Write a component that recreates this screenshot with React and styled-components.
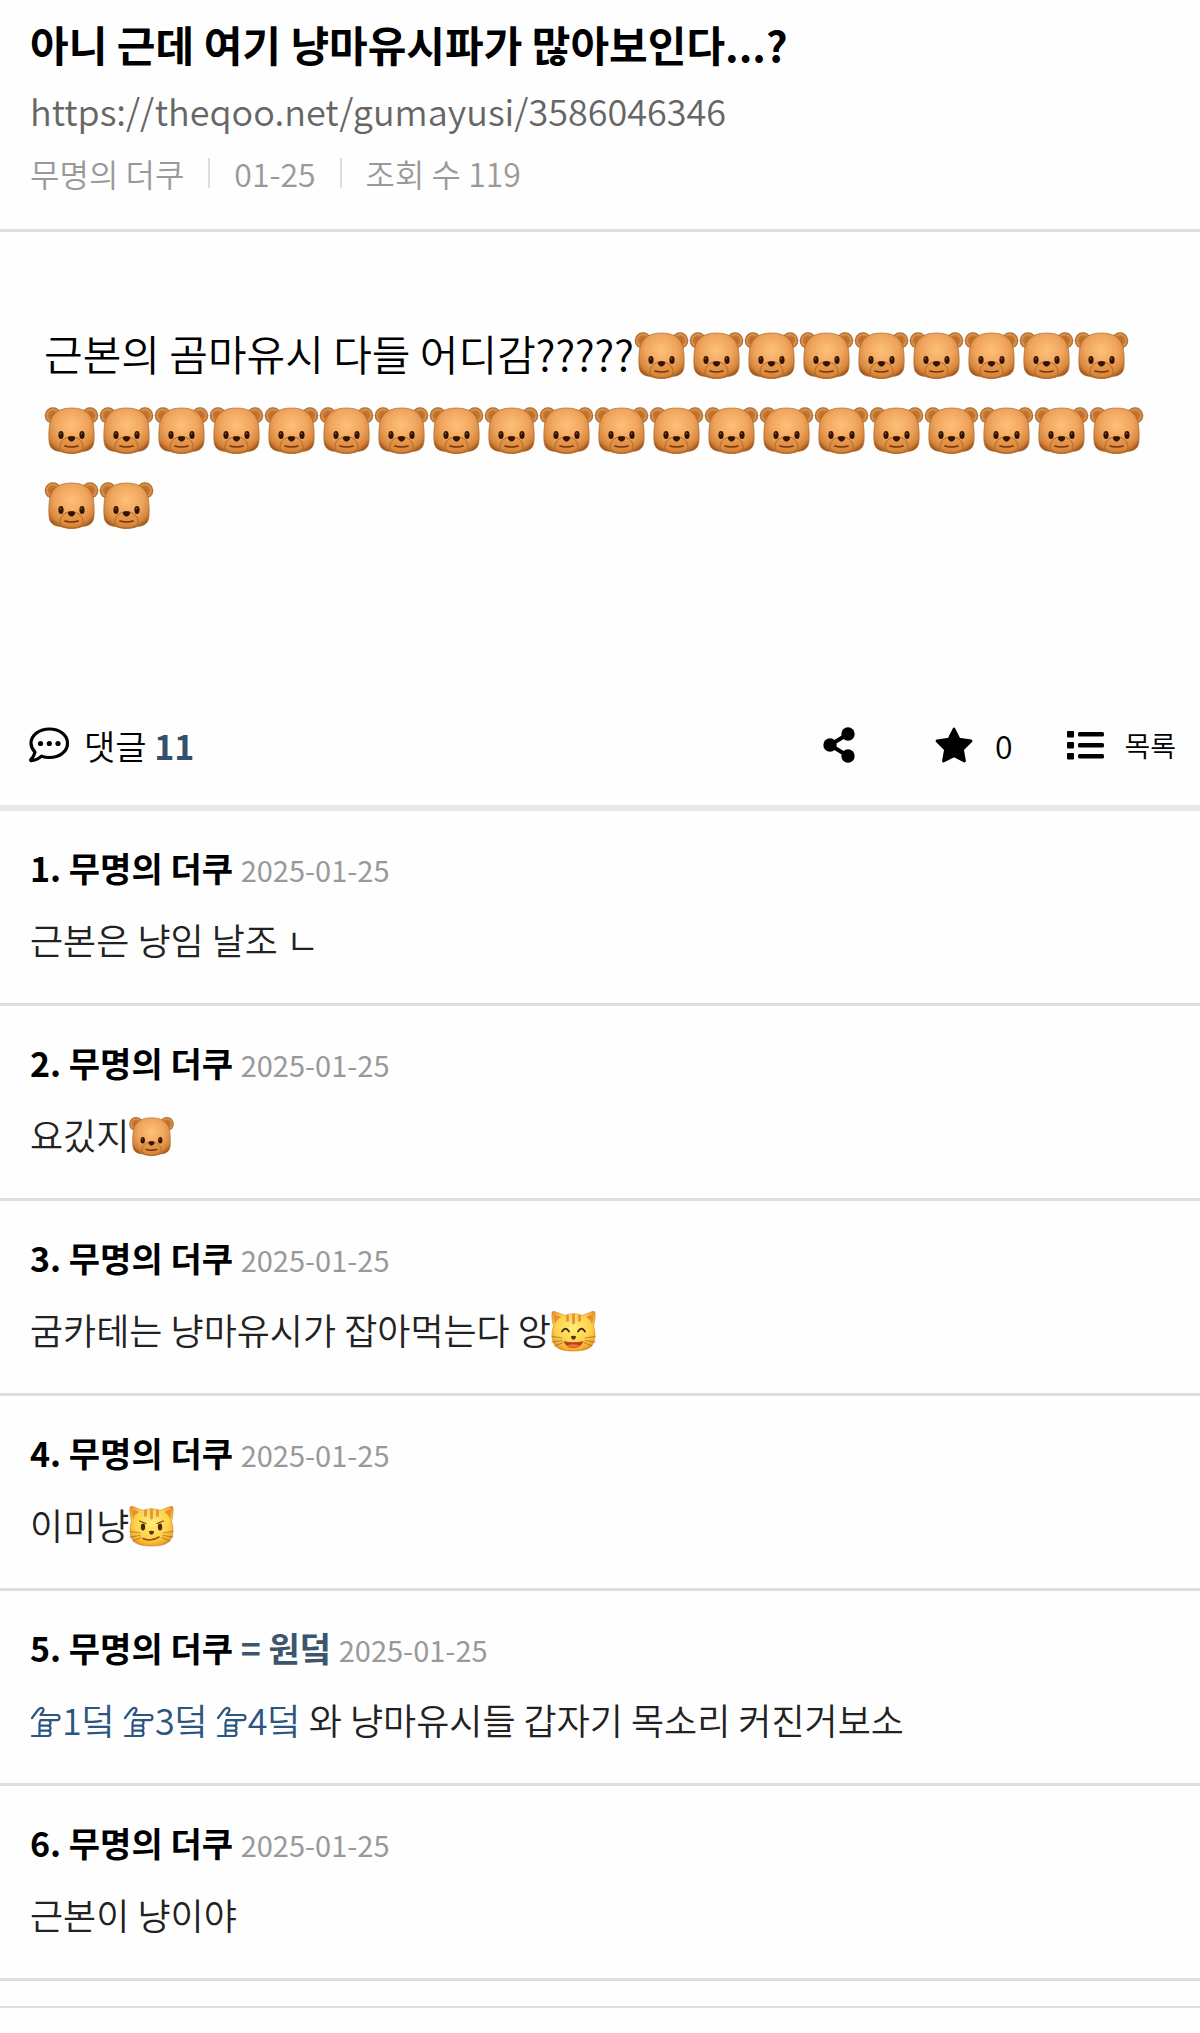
import React, { useId } from 'react'
import styled, { createGlobalStyle } from 'styled-components'

const GlobalStyle = createGlobalStyle`
  body {
    margin: 0;
    background: #fefefe;
    color: #000;
    font-family: "Noto Sans CJK KR", "Noto Sans", sans-serif;
  }
  a {
    color: inherit;
    text-decoration: none;
  }
`

const Header = styled.header`
  padding: 11px 30px 26px;
  border-bottom: 3px solid #dedede;
`

const Title = styled.h1`
  margin: 0;
  font-size: 42px;
  line-height: 66px;
  font-weight: 700;
`

const Permalink = styled.a`
  display: block;
  font-size: 36px;
  line-height: 66px;
  font-weight: 350;
  color: #666;
`

const Meta = styled.div`
  display: flex;
  align-items: center;
  font-size: 32px;
  line-height: 60px;
  font-weight: 350;
  color: #999;

  span + span {
    display: flex;
    align-items: center;
  }
  span + span::before {
    content: '';
    width: 2px;
    height: 30px;
    margin: 0 24px;
    background: #ddd;
  }
`

const Post = styled.article`
  padding: 83px 44px 145px;
  font-size: 42px;
  line-height: 75px;
  font-weight: 350;

  p {
    margin: 0;
  }
`

const Emoji = styled.svg`
  display: inline-block;
  width: ${({ $large }) => ($large ? '55px' : '45px')};
  height: ${({ $large }) => ($large ? '47px' : '41px')};
  vertical-align: ${({ $large }) => ($large ? '-8px' : '-7px')};
`

const Toolbar = styled.div`
  display: flex;
  align-items: center;
  justify-content: space-between;
  height: 120px;
  padding: 0 24px 0 29px;
  border-bottom: 6px solid #e8e8e8;
`

const CommentCount = styled.div`
  display: flex;
  align-items: center;
  gap: 14px;
  font-size: 34px;
  font-weight: 350;

  strong {
    font-weight: 700;
    color: #34506d;
  }
`

const Actions = styled.div`
  display: flex;
  align-items: center;
`

const ActionButton = styled.button`
  display: flex;
  align-items: center;
  gap: 22px;
  margin: 0 55px 0 0;
  padding: 0;
  border: 0;
  background: none;
  color: inherit;
  font: inherit;
  font-size: 32px;
  font-weight: 350;
`

const ShareButton = styled(ActionButton)`
  margin-right: 80px;
`

const ListLink = styled.a`
  display: flex;
  align-items: center;
  gap: 20px;
  font-size: 28px;
  font-weight: 350;
`

const Icon = styled.svg`
  display: block;
  flex: none;
  fill: currentColor;
`

const CommentList = styled.ol`
  margin: 0;
  padding: 0 0 25px;
  list-style: none;
  border-bottom: 2px solid #dedede;
`

const CommentItem = styled.li`
  padding: 30px 30px 28px;
  border-bottom: 3px solid #dedede;
`

const CommentHead = styled.div`
  font-size: 34px;
  line-height: 54px;
  font-weight: 700;

  time {
    font-size: 29px;
    line-height: 1;
    font-weight: 400;
    color: #999;
  }
`

const Owner = styled.span`
  color: #3d546d;
`

const CommentText = styled.p`
  margin: 8px 0 0;
  font-size: 36px;
  line-height: 72px;
  font-weight: 350;
  color: #222;
`

const Mention = styled.a`
  && {
    color: #2c557f;
  }
`

const Hand = styled.svg`
  width: 32px;
  height: 33px;
  vertical-align: -4px;
  fill: none;
  stroke: currentColor;
`

const useGradientId = name => name + useId().replace(/[^a-z0-9]/gi, '')

const Bear = ({ large }) => {
  const head = useGradientId('head')
  const ear = useGradientId('ear')
  return (
    <Emoji $large={large} viewBox="0 0 54 47" role="img" aria-label="곰">
      <defs>
        <radialGradient id={head} cx="50%" cy="38%" r="65%">
          <stop offset="0" stopColor="#ffc07a" />
          <stop offset="0.55" stopColor="#efa45c" />
          <stop offset="0.85" stopColor="#d5853a" />
          <stop offset="1" stopColor="#a05418" />
        </radialGradient>
        <radialGradient id={ear}>
          <stop offset="0" stopColor="#b86a26" />
          <stop offset="0.55" stopColor="#c67830" />
          <stop offset="0.72" stopColor="#dc9750" />
          <stop offset="1" stopColor="#a05f2a" />
        </radialGradient>
      </defs>
      <circle cx="8.5" cy="8.5" r="8.3" fill={`url(#${ear})`} />
      <circle cx="45.5" cy="8.5" r="8.3" fill={`url(#${ear})`} />
      <path
        d="M27 1C38 1 46 5 48.500 15C49.500 20 50 27 49.500 34C49 42 44 44 38 44.500C34 46 31 46.500 27 46.500C23 46.500 20 46 16 44.500C10 44 5 42 4.500 34C4 27 4.500 20 5.500 15C8 5 16 1 27 1Z"
        fill={`url(#${head})`}
        stroke="#a35c22"
        strokeWidth="0.600"
      />
      <path
        d="M15.500 41C15 34 20 30 27 29.500C34 30 39 34 38.500 41C37 45 32 46 27 46C22 46 17 45 15.500 41Z"
        fill="#dc8c40"
        fillOpacity="0.55"
        stroke="#b8661f"
        strokeWidth="1"
      />
      <ellipse cx="16.500" cy="28" rx="2.600" ry="3.900" fill="#301302" />
      <ellipse cx="37.500" cy="28" rx="2.600" ry="3.900" fill="#301302" />
      <circle cx="16" cy="26.500" r="0.900" fill="#93531f" />
      <circle cx="37" cy="26.500" r="0.900" fill="#93531f" />
      <path d="M23.500 30.500C24 28.700 30 28.700 30.500 30.500C31 32.500 28.500 34.500 27 34.500C25.500 34.500 23 32.500 23.500 30.500Z" fill="#301302" />
      <path d="M20.500 39Q27 41 33.500 39" fill="none" stroke="#75330a" strokeWidth="1.700" strokeLinecap="round" />
    </Emoji>
  )
}

const Cat = ({ smirk }) => {
  const fur = useGradientId('fur')
  return (
    <Emoji viewBox="0 0 45 41" role="img" aria-label="고양이">
      <defs>
        <radialGradient id={fur} cx="50%" cy="42%" r="62%">
          <stop offset="0" stopColor="#ffee78" />
          <stop offset="0.65" stopColor="#ffd14a" />
          <stop offset="0.9" stopColor="#f4a82c" />
          <stop offset="1" stopColor="#d98a20" />
        </radialGradient>
      </defs>
      <path
        d="M1 2C1 0 3 0 5 1L14 4.500Q22.500 1 31 4.500L40 1C42 0 44 0 44 2C44.500 7 43.500 11 42.500 15C44 19 44.500 24 43.500 29C42 38 33 40 22.500 40C12 40 3 38 1.500 29C.5 24 1 19 2.500 15C1.500 11 .5 7 1 2Z"
        fill={`url(#${fur})`}
        stroke="#cf8a2c"
        strokeWidth="0.600"
      />
      <path d="M3 4Q4 3 10 6Q5 9 4 13Q2.500 8 3 4ZM42 4Q41 3 35 6Q40 9 41 13Q42.500 8 42 4Z" fill="#e88d31" />
      <path d="M16.500 5V9.500M22.500 4V12M28.500 5V9.500" stroke="#e8923a" strokeWidth="2.800" strokeLinecap="round" />
      {smirk ? (
        <>
          <ellipse cx="14" cy="21" rx="2.200" ry="3.400" fill="#4a2608" />
          <ellipse cx="31" cy="21" rx="2.200" ry="3.400" fill="#4a2608" />
          <path d="M10.500 15L17 17.500M34.500 15L28 17.500" stroke="#7a4515" strokeWidth="1.200" strokeLinecap="round" />
          <path d="M14 32.500Q22 36 30 31" fill="none" stroke="#9b4d12" strokeWidth="1.500" strokeLinecap="round" />
        </>
      ) : (
        <>
          <path d="M11 20.500Q14.500 15 18 20.500M27 20.500Q30.500 15 34 20.500" fill="none" stroke="#4a2608" strokeWidth="1.800" strokeLinecap="round" />
          <path d="M12.500 30Q22.500 32.500 32.500 30Q30 37 22.500 37Q15 37 12.500 30Z" fill="#b8401c" />
          <path d="M16 34.500Q22.500 32 29 34.500Q26 36.500 22.500 36.500Q19 36.500 16 34.500Z" fill="#f0703e" />
        </>
      )}
      <path d="M19.800 25.500Q22.500 24 25.200 25.500Q24.500 28.500 22.500 28.800Q20.500 28.500 19.800 25.500Z" fill="#5a2a0c" />
      <path
        d="M11 27L1 25.500M11 29.500L1 31M12 31.500L4 35M34 27L44 25.500M34 29.500L44 31M33 31.500L41 35"
        stroke="#8d571c"
        strokeWidth="0.600"
        strokeLinecap="round"
      />
    </Emoji>
  )
}

const PointingHand = () => (
  <Hand viewBox="0 0 32 33" role="img" aria-label="☞">
    <path
      d="M2 12L8 4Q10 1.500 12 2Q14.500 3 13 5.500L10.500 9H27Q29.500 9.200 29.500 11.500Q29.500 14 27 14.200H10.500L9.500 17V30M10.500 14.200H18Q20.500 14.500 20.500 17Q20.500 19.500 18 19.700H10M18 19.700Q20.500 20 20.500 22.200Q20.500 24.500 18 24.700H10M18 24.700Q20.500 25 20.500 27.500Q20.500 30 18 30H2"
      strokeWidth="2.200"
      strokeLinecap="round"
      strokeLinejoin="round"
    />
  </Hand>
)

const CommentIcon = () => (
  <Icon width="41" height="36" viewBox="0 0 41 36" aria-hidden="true">
    <path
      d="M20.500 2C30.500 2 38.500 8 38.500 16.200C38.500 24.500 30.500 30.500 20.500 30.500C17.500 30.500 14.800 30 12.500 29.200C9.500 32 5.500 33.500 2 33.600C1.500 33.600 1.600 32.800 2 32.400C4.500 30 5.300 27.500 6 25.200C3.500 22.500 2 19.500 2 16.200C2 8 10.500 2 20.500 2Z"
      fill="none"
      stroke="currentColor"
      strokeWidth="3.200"
      strokeLinejoin="round"
    />
    <circle cx="11.500" cy="16.500" r="2.600" />
    <circle cx="20.300" cy="16.500" r="2.600" />
    <circle cx="29" cy="16.500" r="2.600" />
  </Icon>
)

const ShareIcon = () => (
  <Icon width="32" height="36" viewBox="0 0 32 36" aria-hidden="true">
    <path d="M25 7L7 18L25 29" fill="none" stroke="currentColor" strokeWidth="4" />
    <circle cx="25" cy="7" r="6.700" />
    <circle cx="7" cy="18" r="6.700" />
    <circle cx="25" cy="29" r="6.700" />
  </Icon>
)

const StarIcon = () => (
  <Icon width="38" height="36" viewBox="0 0 38 36" aria-hidden="true">
    <path
      d="M19 2L24 12.200L36 14L27.500 22.400L29.500 34L19 28.700L8.500 34L10.500 22.400L2 14L14 12.200Z"
      stroke="currentColor"
      strokeWidth="2.800"
      strokeLinejoin="round"
    />
  </Icon>
)

const ListIcon = () => (
  <Icon width="37" height="30" viewBox="0 0 37 30" aria-hidden="true">
    {[0, 11, 22].map(y => (
      <g key={y}>
        <rect x="0" y={y + 1} width="7" height="6.500" rx="1" />
        <rect x="11" y={y + 2} width="26" height="4.600" rx="1.500" />
      </g>
    ))}
  </Icon>
)

const comments = [
  { id: 1, body: '근본은 냥임 날조 ㄴ' },
  { id: 2, body: <>요깄지<Bear /></> },
  { id: 3, body: <>굼카테는 냥마유시가 잡아먹는다 앙<Cat /></> },
  { id: 4, body: <>이미냥<Cat smirk /></> },
  { id: 5, owner: true, mentions: [1, 3, 4], body: '와 냥마유시들 갑자기 목소리 커진거보소' },
  { id: 6, body: '근본이 냥이야' }
]

const Comment = ({ id, owner, mentions = [], body }) => (
  <CommentItem id={`comment-${id}`}>
    <CommentHead>
      {id}. 무명의 더쿠 {owner && <Owner>= 원덬 </Owner>}
      <time dateTime="2025-01-25">2025-01-25</time>
    </CommentHead>
    <CommentText>
      {mentions.map(n => (
        <React.Fragment key={n}>
          <Mention href={`#comment-${n}`}><PointingHand />{n}덬</Mention>{' '}
        </React.Fragment>
      ))}
      {body}
    </CommentText>
  </CommentItem>
)

const App = () => {
  return (
    <>
      <GlobalStyle />
      <main>
        <Header>
          <Title>아니 근데 여기 냥마유시파가 많아보인다...?</Title>
          <Permalink href="https://theqoo.net/gumayusi/3586046346">
            https://theqoo.net/gumayusi/3586046346
          </Permalink>
          <Meta>
            <span>무명의 더쿠</span>
            <span>01-25</span>
            <span>조회 수 119</span>
          </Meta>
        </Header>
        <Post>
          <p>
            근본의 곰마유시 다들 어디감?????
            {Array.from({ length: 31 }, (_, i) => <Bear key={i} large />)}
          </p>
        </Post>
        <Toolbar>
          <CommentCount>
            <CommentIcon />
            <span>댓글 <strong>11</strong></span>
          </CommentCount>
          <Actions>
            <ShareButton type="button" aria-label="공유"><ShareIcon /></ShareButton>
            <ActionButton type="button"><StarIcon />0</ActionButton>
            <ListLink href="#list"><ListIcon />목록</ListLink>
          </Actions>
        </Toolbar>
        <CommentList>
          {comments.map(comment => <Comment key={comment.id} {...comment} />)}
        </CommentList>
      </main>
    </>
  )
}

export default App
